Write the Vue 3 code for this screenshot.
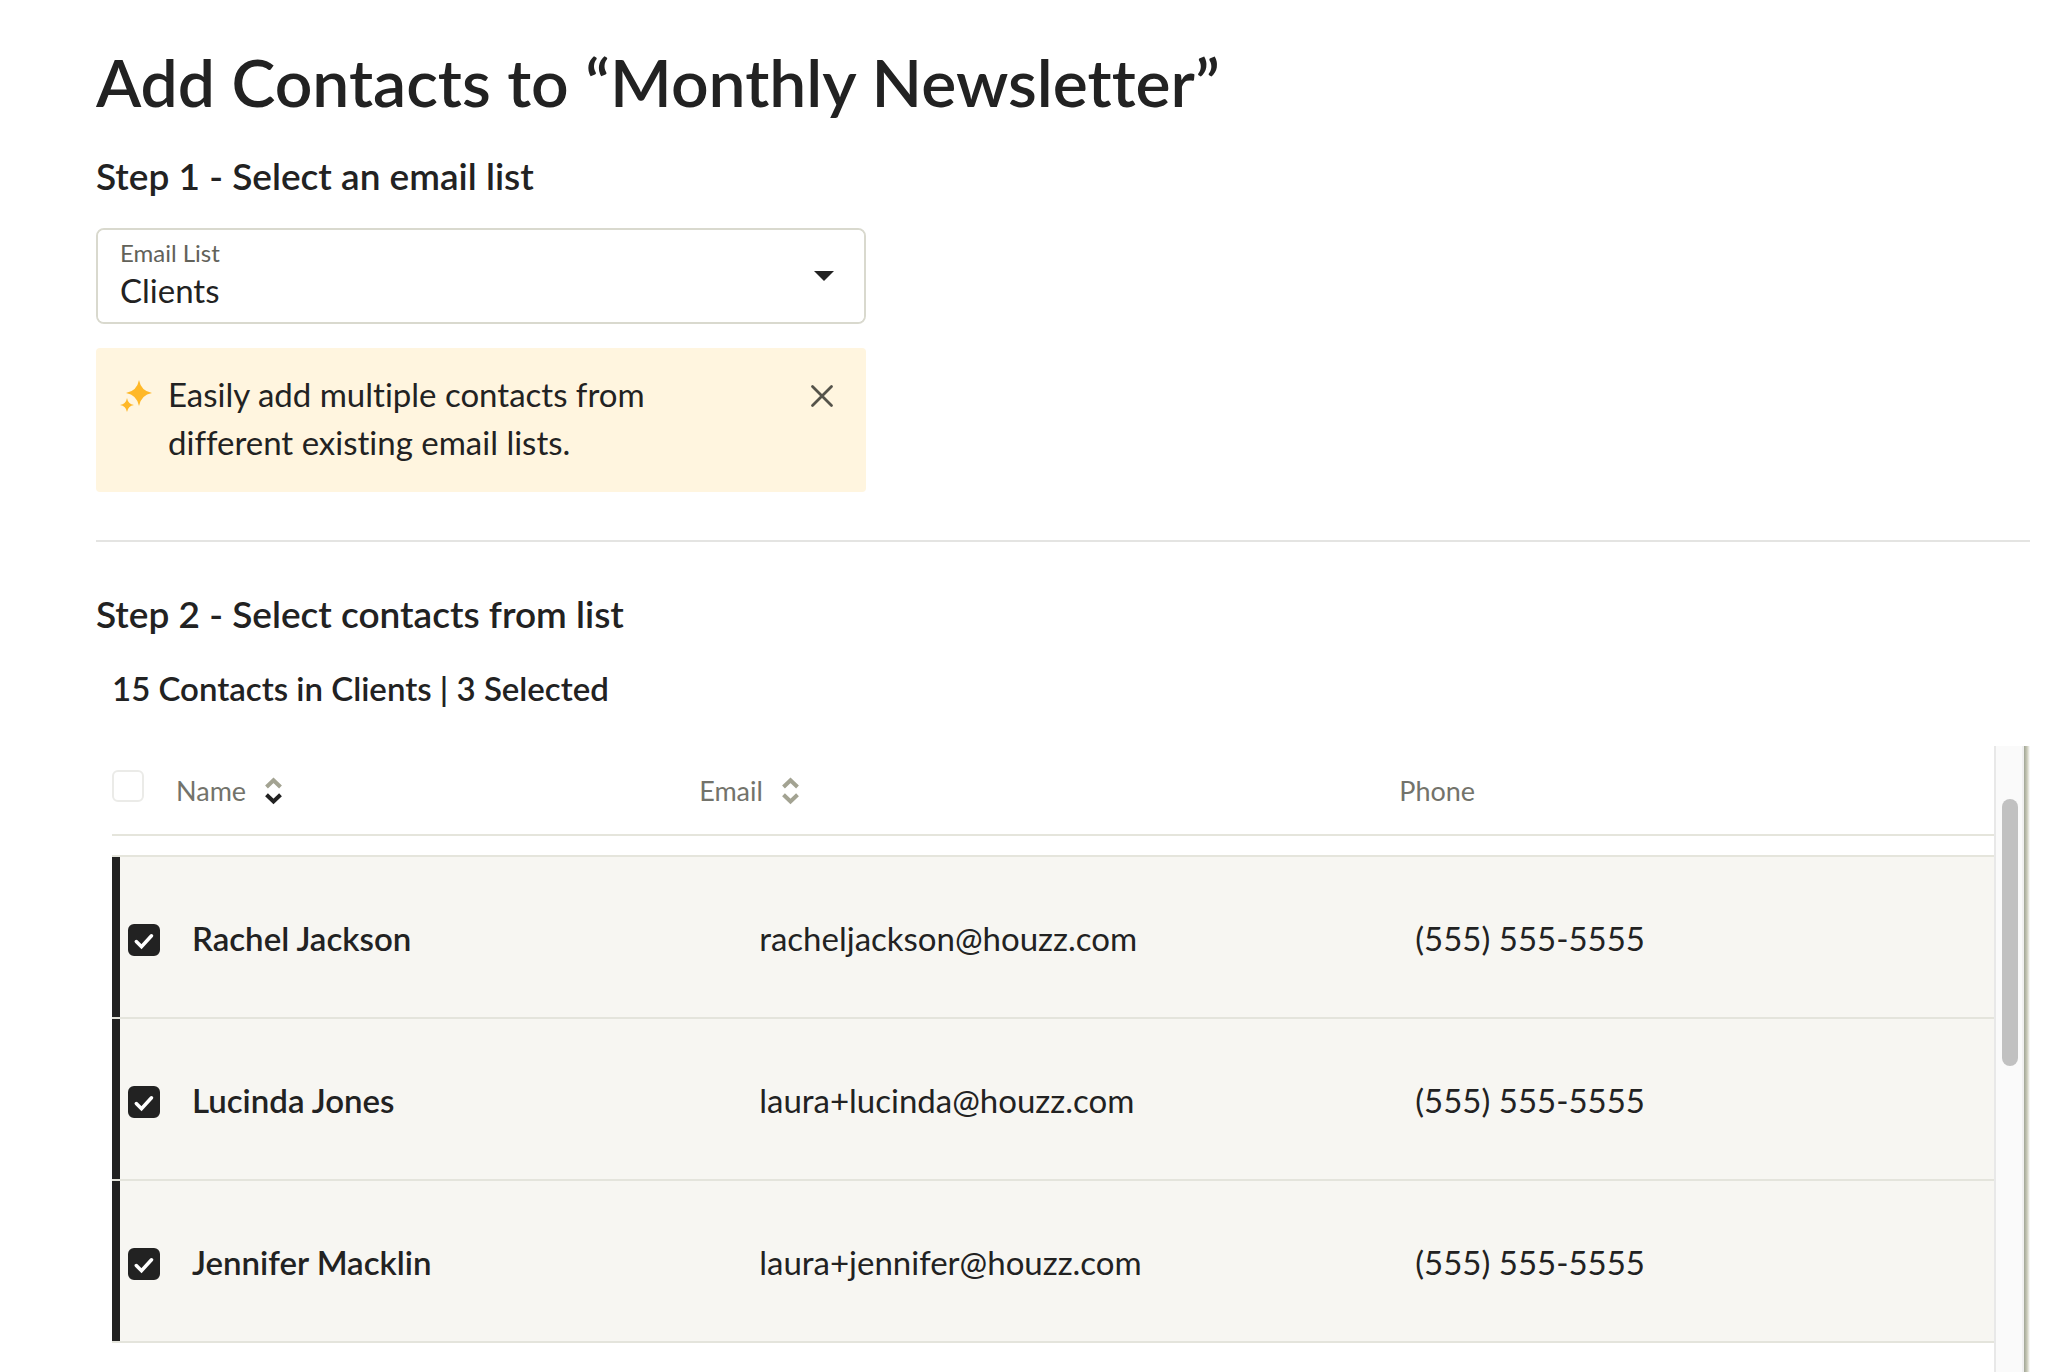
<script setup>
import { computed, ref } from 'vue'

const emailList = ref('Clients')
const noticeOpen = ref(true)
const total = 15

const contacts = ref([
  { name: 'Rachel Jackson', email: 'racheljackson@houzz.com', phone: '(555) 555-5555', selected: true },
  { name: 'Lucinda Jones', email: 'laura+lucinda@houzz.com', phone: '(555) 555-5555', selected: true },
  { name: 'Jennifer Macklin', email: 'laura+jennifer@houzz.com', phone: '(555) 555-5555', selected: true },
])

const selectedCount = computed(() => contacts.value.filter((c) => c.selected).length)
</script>

<template>
  <main class="page">
    <h1 class="title">Add Contacts to “Monthly Newsletter”</h1>

    <section class="step">
      <h2 class="step-title">Step 1 - Select an email list</h2>

      <div class="field">
        <label class="field-label" for="email-list">Email List</label>
        <select id="email-list" v-model="emailList" class="field-select">
          <option>Clients</option>
        </select>
        <svg class="field-caret" width="20" height="10" viewBox="0 0 20 10" aria-hidden="true">
          <path d="M0 0h20L10 10z" fill="#222" />
        </svg>
      </div>

      <div v-if="noticeOpen" class="notice" role="status">
        <svg class="notice-icon" width="32" height="36" viewBox="0 0 32 36" aria-hidden="true">
          <path d="M19 2Q21 13 32 15Q21 17 19 28Q17 17 6 15Q17 13 19 2z" fill="#ffb827" />
          <path d="M7 20Q8 26 14 27Q8 28 7 34Q6 28 0 27Q6 26 7 20z" fill="#ffb827" />
        </svg>
        <p class="notice-text">Easily add multiple contacts from<br />different existing email lists.</p>
        <button class="notice-close" type="button" aria-label="Dismiss" @click="noticeOpen = false">
          <svg width="32" height="32" viewBox="0 0 32 32" aria-hidden="true">
            <path d="M6.5 6.5l19 19M25.5 6.5l-19 19" fill="none" stroke="#55534a" stroke-width="2.8" stroke-linecap="round" />
          </svg>
        </button>
      </div>
    </section>

    <hr class="divider" />

    <section class="step step-list">
      <h2 class="step-title">Step 2 - Select contacts from list</h2>
      <p class="summary">{{ total }} Contacts in {{ emailList }} | {{ selectedCount }} Selected</p>

      <div class="list">
        <div class="list-body">
          <table class="contacts">
            <colgroup>
              <col class="col-check" />
              <col class="col-name" />
              <col class="col-email" />
              <col />
            </colgroup>
            <thead>
              <tr>
                <th class="check-head">
                  <input class="box-empty" type="checkbox" aria-label="Select all contacts" />
                </th>
                <th aria-sort="descending">
                  <button class="sort" type="button">
                    Name
                    <svg width="20" height="32" viewBox="0 0 20 32" fill="none" stroke-width="4" aria-hidden="true">
                      <path d="M2.5 13L9.5 6.2L16.5 13" stroke="#a3a392" />
                      <path d="M2.5 20.7L9.5 27.5L16.5 20.7" stroke="#222" />
                    </svg>
                  </button>
                </th>
                <th>
                  <button class="sort" type="button">
                    Email
                    <svg width="20" height="32" viewBox="0 0 20 32" fill="none" stroke-width="4" aria-hidden="true">
                      <path d="M2.5 13L9.5 6.2L16.5 13" stroke="#a3a392" />
                      <path d="M2.5 20.7L9.5 27.5L16.5 20.7" stroke="#a3a392" />
                    </svg>
                  </button>
                </th>
                <th>Phone</th>
              </tr>
            </thead>
            <tbody>
              <tr v-for="c in contacts" :key="c.email" :class="{ selected: c.selected }">
                <td class="check-cell">
                  <label class="check">
                    <input v-model="c.selected" type="checkbox" :aria-label="`Select ${c.name}`" />
                    <svg v-if="c.selected" width="32" height="32" viewBox="0 0 32 32" aria-hidden="true">
                      <path d="M8.3 17.5L13.5 22.7L23.5 11.8" fill="none" stroke="#fff" stroke-width="3.5" stroke-linecap="round" />
                    </svg>
                  </label>
                </td>
                <td class="name-cell">{{ c.name }}</td>
                <td class="email-cell">{{ c.email }}</td>
                <td class="phone-cell">{{ c.phone }}</td>
              </tr>
            </tbody>
          </table>
        </div>
        <div class="scrollbar" aria-hidden="true"><div class="scrollbar-thumb"></div></div>
        <div class="edge" aria-hidden="true"></div>
      </div>
    </section>
  </main>
</template>

<style>
body {
  background: #fff;
}
</style>

<style scoped>
.page {
  box-sizing: border-box;
  display: flex;
  flex-direction: column;
  min-height: 100vh;
  padding: 42px 38px 0 96px;
  color: #222;
  font-family: Lato, "Liberation Sans", sans-serif;
  font-size: 33px;
  font-variant-ligatures: none;
}

.title {
  margin: 0 0 30px;
  font-size: 66px;
  font-weight: 600;
  line-height: 80px;
}

.step-title {
  margin: 0;
  font-size: 37px;
  font-weight: 600;
  line-height: 48px;
}

.field {
  box-sizing: border-box;
  display: grid;
  width: 100%;
  max-width: 770px;
  margin-top: 28px;
  border: 2px solid #d9d9ce;
  border-radius: 8px;
}

.field > * {
  grid-area: 1 / 1;
}

.field-label {
  z-index: 1;
  align-self: start;
  justify-self: start;
  padding: 7px 0 0 22px;
  color: #62625a;
  font-size: 24px;
  line-height: 32px;
}

.field-select {
  box-sizing: border-box;
  width: 100%;
  height: 92px;
  padding: 40px 64px 12px 22px;
  border: 0;
  border-radius: 6px;
  appearance: none;
  background: #fff;
  color: #222;
  font: inherit;
  line-height: 40px;
}

.field-caret {
  z-index: 1;
  align-self: center;
  justify-self: end;
  margin-right: 30px;
  pointer-events: none;
}

.notice {
  box-sizing: border-box;
  display: flex;
  align-items: flex-start;
  gap: 16px;
  width: 100%;
  max-width: 770px;
  margin-top: 24px;
  padding: 22px 28px 26px 24px;
  border-radius: 4px;
  background: #fff5df;
}

.notice-icon {
  flex: none;
  margin-top: 8px;
}

.notice-text {
  flex: 1;
  margin: 0;
  line-height: 48px;
}

.notice-close {
  display: flex;
  margin: 10px 0 0;
  padding: 0;
  border: 0;
  background: none;
  cursor: pointer;
}

.divider {
  width: 100%;
  height: 2px;
  margin: 48px 0;
  border: 0;
  background: #e4e4e2;
}

.step-list {
  display: flex;
  flex: 1;
  flex-direction: column;
}

.summary {
  margin: 30px 0 38px 16px;
  font-weight: 600;
  line-height: 40px;
}

.list {
  display: flex;
  flex: 1;
  margin-left: 16px;
}

.list-body {
  flex: 1;
  min-width: 0;
}

.contacts {
  width: 100%;
  border-spacing: 0;
  table-layout: fixed;
  text-align: left;
}

.col-check {
  width: 64px;
}

.col-name {
  width: 27.8%;
}

.col-email {
  width: 37.2%;
}

th {
  height: 88px;
  padding: 0;
  border-bottom: 2px solid #e5e5dc;
  color: #73736b;
  font-size: 27px;
  font-weight: 400;
}

.check-head {
  height: 80px;
  padding-bottom: 8px;
}

.box-empty {
  display: block;
  width: 32px;
  height: 32px;
  margin: 0;
  border: 2px solid #ebebe8;
  border-radius: 6px;
  appearance: none;
}

.sort {
  display: flex;
  align-items: center;
  gap: 18px;
  padding: 0;
  border: 0;
  background: none;
  color: inherit;
  font: inherit;
  cursor: pointer;
}

tbody::before {
  display: block;
  height: 19px;
  content: "";
}

td {
  height: 158px;
  padding: 2px 0 0;
  border-bottom: 2px solid #e4e4dc;
}

tbody tr:first-child td {
  border-top: 2px solid #e5e5dc;
}

.selected td {
  background: #f7f6f2;
}

.check-cell {
  height: 154px;
  padding: 6px 0 0 16px;
}

.selected .check-cell {
  box-shadow: inset 8px 0 #222;
}

.check {
  display: grid;
  width: 32px;
  height: 32px;
}

.check > * {
  grid-area: 1 / 1;
}

.check input {
  width: 32px;
  height: 32px;
  margin: 0;
  border: 2px solid #ebebe8;
  border-radius: 6px;
  appearance: none;
}

.check input:checked {
  border-color: #222;
  background: #222;
}

.check svg {
  z-index: 1;
  pointer-events: none;
}

.name-cell {
  padding-left: 16px;
  font-weight: 600;
}

.email-cell {
  padding-left: 60px;
}

.phone-cell {
  padding-left: 16px;
}

.scrollbar {
  box-sizing: border-box;
  flex: none;
  width: 30px;
  padding: 53px 6px 0;
  border-right: 2px solid #f0f0f0;
  border-left: 2px solid #e8e8e8;
  background: #fafafa;
}

.scrollbar-thumb {
  width: 16px;
  height: 267px;
  border-radius: 8px;
  background: #c1c1c1;
}

.edge {
  flex: none;
  width: 6px;
  background: linear-gradient(to right, #a0a595, #c9cab8 50%, #fff);
}
</style>
